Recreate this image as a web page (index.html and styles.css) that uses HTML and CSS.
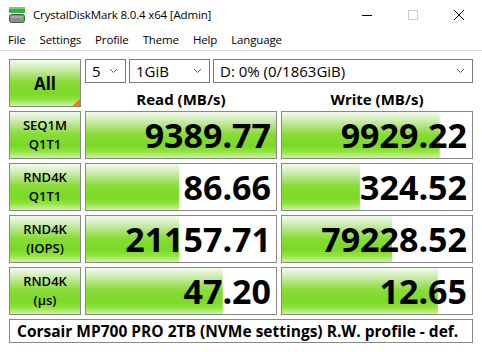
FILE: index.html
```html
<!DOCTYPE html>
<html lang="en">
<head>
<meta charset="utf-8">
<title>CrystalDiskMark 8.0.4 x64 [Admin]</title>
<link rel="stylesheet" href="styles.css">
</head>
<body>
<div class="window">
  <div class="titlebar">
    <svg class="appicon" width="16" height="16" viewBox="0 0 16 16">
      <rect x="0" y="0" width="16" height="6" fill="#2fb344"/>
      <rect x="0" y="0" width="16" height="2" fill="#6fd36f"/>
      <rect x="0.5" y="7.5" width="15" height="8" rx="2" fill="#8c8c8c" stroke="#505050"/>
      <rect x="2" y="9" width="12" height="2" fill="#a8a8a8"/>
      <rect x="11" y="11" width="3" height="2" fill="#3ccf3c"/>
    </svg>
    <span class="title">CrystalDiskMark 8.0.4 x64 [Admin]</span>
    <div class="controls">
      <span class="ctl"><svg width="10" height="10" viewBox="0 0 10 10"><path d="M0 5.5H10" stroke="#000" stroke-width="1"/></svg></span>
      <span class="ctl"><svg width="10" height="10" viewBox="0 0 10 10"><rect x="0.5" y="0.5" width="9" height="9" fill="none" stroke="#cccccc"/></svg></span>
      <span class="ctl"><svg width="10" height="10" viewBox="0 0 10 10"><path d="M0 0L10 10M10 0L0 10" stroke="#000" stroke-width="1"/></svg></span>
    </div>
  </div>
  <div class="menubar">
    <span class="menu">File</span>
    <span class="menu">Settings</span>
    <span class="menu">Profile</span>
    <span class="menu">Theme</span>
    <span class="menu">Help</span>
    <span class="menu">Language</span>
  </div>
  <div class="main">
    <div class="tile all">All</div>
    <div class="combos">
      <div class="combo c-count"><span>5</span><svg class="chev" width="7" height="4" viewBox="0 0 7 4"><path d="M0 0L3.5 3.5L7 0" fill="none" stroke="#606060"/></svg></div>
      <div class="combo c-size"><span>1GiB</span><svg class="chev" width="7" height="4" viewBox="0 0 7 4"><path d="M0 0L3.5 3.5L7 0" fill="none" stroke="#606060"/></svg></div>
      <div class="combo c-drive"><span>D: 0% (0/1863GiB)</span><svg class="chev" width="7" height="4" viewBox="0 0 7 4"><path d="M0 0L3.5 3.5L7 0" fill="none" stroke="#606060"/></svg></div>
    </div>
    <div class="head">Read (MB/s)</div>
    <div class="head">Write (MB/s)</div>

    <div class="tile label">SEQ1M<br>Q1T1</div>
    <div class="val" style="--fill:100%">9389.77</div>
    <div class="val" style="--fill:83%">9929.22</div>

    <div class="tile label">RND4K<br>Q1T1</div>
    <div class="val" style="--fill:49%">86.66</div>
    <div class="val" style="--fill:41%">324.52</div>

    <div class="tile label">RND4K<br>(IOPS)</div>
    <div class="val" style="--fill:49%">21157.71</div>
    <div class="val" style="--fill:58%">79228.52</div>

    <div class="tile label">RND4K<br>(µs)</div>
    <div class="val" style="--fill:72%">47.20</div>
    <div class="val" style="--fill:82%">12.65</div>

    <div class="footer">Corsair MP700 PRO 2TB (NVMe settings) R.W. profile - def.</div>
  </div>
</div>
</body>
</html>
```
FILE: styles.css
```css
html, body {
  margin: 0;
  padding: 0;
  background: #ffffff;
}

.window {
  width: 482px;
  height: 352px;
  background: #ffffff;
  font-family: "Open Sans", "Noto Sans", sans-serif;
  color: #000;
  overflow: hidden;
}

.titlebar {
  height: 30px;
  display: flex;
  align-items: center;
  padding-left: 9px;
}

.appicon {
  flex: none;
  margin-top: -1px;
}

.title {
  margin-left: 8px;
  font-size: 11.5px;
  letter-spacing: -0.15px;
  line-height: 30px;
  color: #000;
}

.controls {
  margin-left: auto;
  display: flex;
  height: 30px;
}

.ctl {
  width: 46px;
  height: 30px;
  display: flex;
  align-items: center;
  justify-content: center;
}

.ctl svg {
  display: block;
}

.menubar {
  height: 20px;
  display: flex;
  padding-left: 1px;
  border-bottom: 1px solid #dadada;
}

.menu {
  font-size: 11.5px;
  letter-spacing: -0.15px;
  line-height: 20px;
  padding: 0 7px;
}

.main {
  display: grid;
  grid-template-columns: 72px 192px 192px;
  grid-template-rows: 24px 20px 48px 48px 48px 48px 24px;
  gap: 4px;
  padding: 8px 0 0 9px;
}

.tile {
  box-sizing: border-box;
  border: 1px solid #888;
  background: linear-gradient(180deg, #f4faf0 0%, #d6f0c2 14%, #a9e270 34%, #86dc34 50%, #7cd926 74%, #92e43f 86%, #cdf3a6 100%);
  display: flex;
  align-items: center;
  justify-content: center;
  text-align: center;
}

.all {
  grid-row: 1 / span 2;
  font-size: 17px;
  font-weight: 700;
  background:
    linear-gradient(to top left, #f07a1c 50%, transparent 50%) right bottom / 8px 8px no-repeat,
    linear-gradient(180deg, #f4faf0 0%, #d6f0c2 14%, #a9e270 34%, #86dc34 50%, #7cd926 74%, #92e43f 86%, #cdf3a6 100%);
}

.combos {
  grid-column: 2 / span 2;
  display: flex;
  gap: 3px;
}

.combo {
  box-sizing: border-box;
  height: 24px;
  border: 1px solid #7a7a7a;
  background: #fff;
  display: flex;
  align-items: center;
  padding: 0 8px 0 6px;
  font-size: 15px;
}

.combo .chev {
  margin-left: auto;
  flex: none;
}

.c-count { width: 41px; }
.c-size { width: 81px; }
.c-drive { flex: 1; }

.head {
  font-size: 15px;
  font-weight: 700;
  text-align: center;
  line-height: 18px;
  padding-top: 3px;
}

.label {
  font-size: 13px;
  font-weight: 600;
  line-height: 19.5px;
}

.val {
  box-sizing: border-box;
  border: 1px solid #888;
  background:
    linear-gradient(180deg, #f4faf0 0%, #d6f0c2 14%, #a9e270 34%, #86dc34 50%, #7cd926 74%, #92e43f 86%, #cdf3a6 100%) 0 0 / var(--fill) 100% no-repeat,
    #ffffff;
  font-size: 34px;
  font-weight: 700;
  text-align: right;
  line-height: 46px;
  padding: 0 5px 0 0;
  white-space: nowrap;
}

.footer {
  grid-column: 1 / span 3;
  box-sizing: border-box;
  border: 1px solid #888;
  font-size: 15.5px;
  font-weight: 700;
  line-height: 22px;
  padding-left: 7px;
  white-space: nowrap;
  overflow: hidden;
}
```
